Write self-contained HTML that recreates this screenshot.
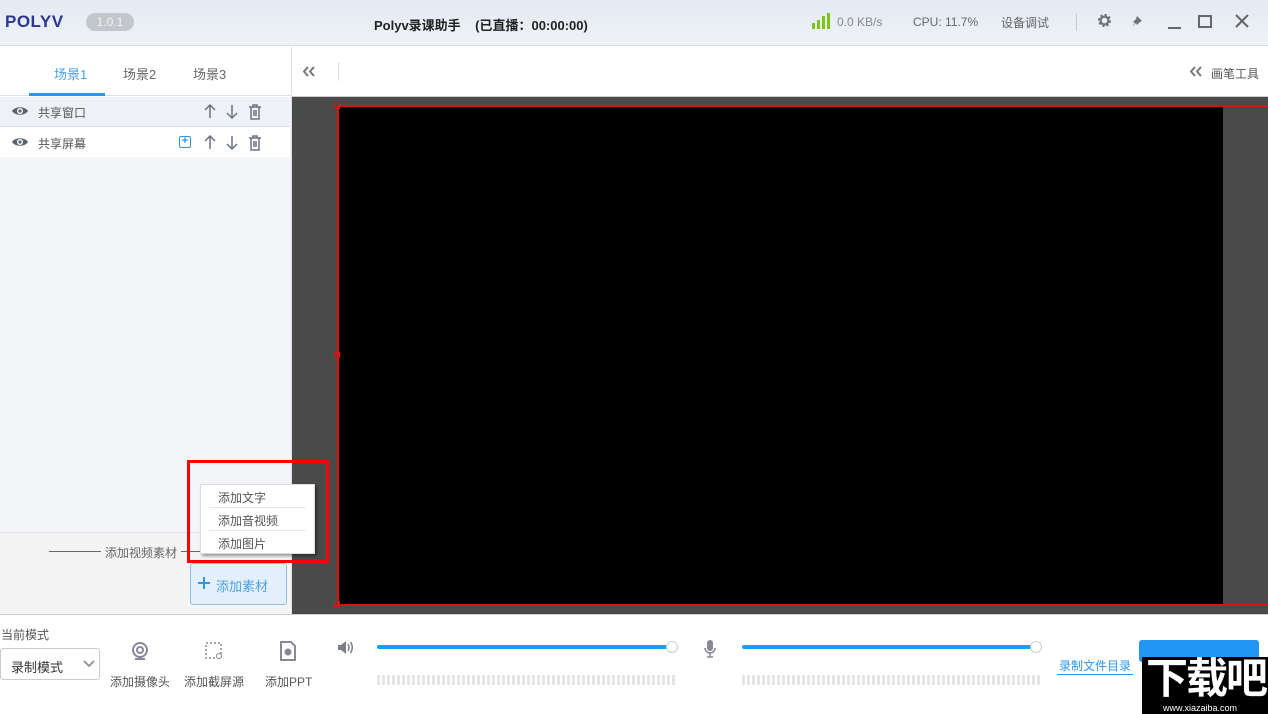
<!DOCTYPE html>
<html><head><meta charset="utf-8"><style>
*{margin:0;padding:0;box-sizing:border-box}
body{width:1268px;height:714px;overflow:hidden;position:relative;font-family:"Liberation Sans","Noto Sans CJK SC",sans-serif;background:#fff;color:#555}
.a{position:absolute}
.t{font-size:12px;white-space:nowrap}
</style></head><body>
<div class="a" style="left:0;top:0;width:1268px;height:46px;background:linear-gradient(#e3eaf2,#eef2f6);border-bottom:1px solid #d6dbe0"></div>
<div class="a" style="left:5px;top:12px;font-size:17px;font-weight:bold;color:#2a3690;letter-spacing:0.5px">POLYV</div>
<div class="a" style="left:86px;top:13px;width:48px;height:18px;border-radius:9px;background:#c3c7cb;color:#f4f4f4;font-size:12px;text-align:center;line-height:18px">1.0.1</div>
<div class="a" style="left:374px;top:15px;font-size:13px;font-weight:bold;color:#222">Polyv录课助手&nbsp;&nbsp;&nbsp;&nbsp;(已直播：00:00:00)</div>
<svg class="a" style="left:812px;top:13px" width="20" height="17"><rect x="0" y="10" width="3" height="6" fill="#7cc41a"/><rect x="5" y="7" width="3" height="9" fill="#7cc41a"/><rect x="10" y="3" width="3" height="13" fill="#7cc41a"/><rect x="15" y="0" width="3" height="16" fill="#7cc41a"/></svg>
<div class="a t" style="left:837px;top:15px;color:#888">0.0 KB/s</div>
<div class="a t" style="left:913px;top:15px;color:#666">CPU: 11.7%</div>
<div class="a t" style="left:1001px;top:14px;color:#666">设备调试</div>
<div class="a" style="left:1076px;top:13px;width:1px;height:18px;background:#c8ccd0"></div>
<svg class="a" style="left:1097px;top:13px" width="15" height="15" viewBox="0 0 16 16"><circle cx="8" cy="8" r="5.5" fill="none" stroke="#6b7280" stroke-width="3" stroke-dasharray="2.2 2.1"/><circle cx="8" cy="8" r="4.2" fill="none" stroke="#6b7280" stroke-width="2.4"/></svg>
<svg class="a" style="left:1131px;top:15px" width="12" height="12"><path d="M6 1l5 5-2 1-3 3-1-2-4 4 3-4-2-1 3-3z" fill="#6b7280"/></svg>
<div class="a" style="left:1168px;top:27px;width:13px;height:2px;background:#666"></div>
<div class="a" style="left:1198px;top:15px;width:14px;height:13px;border:2px solid #666"></div>
<svg class="a" style="left:1235px;top:14px" width="14" height="14"><path d="M1 1l12 12M13 1L1 13" stroke="#666" stroke-width="2"/></svg>
<div class="a" style="left:0;top:47px;width:291px;height:49px;background:#fff;border-bottom:1px solid #dde1e5"></div>
<div class="a t" style="left:54px;top:64px;font-size:13px;color:#4aa0e8">场景1</div>
<div class="a" style="left:29px;top:93px;width:76px;height:3px;background:#2c96ea"></div>
<div class="a t" style="left:123px;top:64px;font-size:13px;color:#666">场景2</div>
<div class="a t" style="left:193px;top:64px;font-size:13px;color:#666">场景3</div>
<div class="a" style="left:0;top:97px;width:291px;height:435px;background:#f3f5f8"></div>
<div class="a" style="left:0;top:97px;width:290px;height:30px;background:#eef2f6;border-bottom:1px solid #dde1e5"></div>
<div class="a" style="left:0;top:127px;width:290px;height:30px;background:#fff"></div>
<svg width="0" height="0" style="position:absolute"><defs>
<g id="eye"><path d="M0 5C3 0 13 0 16 5C13 10 3 10 0 5z" fill="#5a6570"/><circle cx="8" cy="5" r="3" fill="#fff"/><circle cx="8" cy="5" r="1.6" fill="#5a6570"/></g>
<g id="ud" stroke="#6b7280" stroke-width="1.5" fill="none"><path d="M6 14V1M1 6l5-5 5 5"/><path d="M28 1v13M23 9l5 5 5-5"/><path d="M45 3h12M49 3V1h4v2M47 3v12h8V3M50 6v6M52 6v6"/></g>
</defs></svg>
<svg class="a" style="left:12px;top:106px" width="16" height="10"><use href="#eye"/></svg>
<div class="a t" style="left:38px;top:104px;color:#555">共享窗口</div>
<svg class="a" style="left:204px;top:104px" width="60" height="16"><use href="#ud"/></svg>
<svg class="a" style="left:12px;top:137px" width="16" height="10"><use href="#eye"/></svg>
<div class="a t" style="left:38px;top:135px;color:#555">共享屏幕</div>
<div class="a" style="left:179px;top:136px;width:12px;height:12px;border:1.5px solid #2c96ea;border-radius:2px;color:#2c96ea;font-size:11px;line-height:9px;text-align:center;font-weight:bold">+</div>
<svg class="a" style="left:204px;top:135px" width="60" height="16"><use href="#ud"/></svg>
<div class="a" style="left:0;top:532px;width:291px;height:82px;background:#f4f4f4;border-top:1px solid #e2e5e8"></div>
<div class="a" style="left:49px;top:551px;width:52px;height:1px;background:#666"></div>
<div class="a t" style="left:105px;top:544px;color:#666">添加视频素材</div>
<div class="a" style="left:181px;top:551px;width:20px;height:1px;background:#666"></div>
<div class="a" style="left:190px;top:563px;width:97px;height:42px;background:#e3f0fb;border:1px solid #8cc2ee;border-radius:3px"></div>
<svg class="a" style="left:198px;top:577px" width="12" height="12"><path d="M6 0v12M0 6h12" stroke="#2c96ea" stroke-width="2"/></svg>
<div class="a t" style="left:216px;top:576px;font-size:13px;color:#4aa0e8">添加素材</div>
<div class="a" style="left:291px;top:47px;width:1px;height:568px;background:#dde1e5"></div>
<svg class="a" style="left:303px;top:66px" width="12" height="11"><path d="M5 1L1 5.5 5 10M11 1L7 5.5 11 10" stroke="#777" stroke-width="2" fill="none"/></svg>
<div class="a" style="left:338px;top:62px;width:1px;height:19px;background:#dde"></div>
<svg class="a" style="left:1190px;top:66px" width="12" height="11"><path d="M5 1L1 5.5 5 10M11 1L7 5.5 11 10" stroke="#777" stroke-width="2" fill="none"/></svg>
<div class="a t" style="left:1211px;top:65px;color:#555">画笔工具</div>
<div class="a" style="left:292px;top:96px;width:976px;height:1px;background:#ccc"></div>
<div class="a" style="left:292px;top:97px;width:976px;height:518px;background:#4b4a4a"></div>
<div class="a" style="left:338px;top:106px;width:885px;height:498px;background:#000"></div>
<div class="a" style="left:337px;top:105px;width:940px;height:501px;border:2px solid #e01010"></div>
<div class="a" style="left:334px;top:103px;width:6px;height:6px;border:1px solid #e01010"></div>
<div class="a" style="left:334px;top:352px;width:6px;height:6px;border:1px solid #e01010"></div>
<div class="a" style="left:334px;top:601px;width:6px;height:6px;border:1px solid #e01010"></div>
<div class="a" style="left:187px;top:460px;width:142px;height:103px;border:3px solid #f00"></div>
<div class="a" style="left:200px;top:484px;width:115px;height:70px;background:#fff;border:1px solid #ddd;box-shadow:2px 2px 3px rgba(0,0,0,.4)"></div>
<div class="a t" style="left:218px;top:489px;color:#555">添加文字</div>
<div class="a" style="left:209px;top:507px;width:97px;height:1px;background:#e6e6e6"></div>
<div class="a t" style="left:218px;top:512px;color:#555">添加音视频</div>
<div class="a" style="left:209px;top:530px;width:97px;height:1px;background:#e6e6e6"></div>
<div class="a t" style="left:218px;top:535px;color:#555">添加图片</div>
<div class="a" style="left:0;top:614px;width:1268px;height:1px;background:#ccc"></div>
<div class="a t" style="left:1px;top:626px;color:#555">当前模式</div>
<div class="a" style="left:0;top:648px;width:100px;height:32px;border:1px solid #ccc;border-radius:3px"></div>
<div class="a t" style="left:11px;top:657px;font-size:13px;color:#333">录制模式</div>
<svg class="a" style="left:83px;top:660px" width="12" height="8"><path d="M1 1l5 5 5-5" stroke="#999" stroke-width="2" fill="none"/></svg>
<svg class="a" style="left:131px;top:641px" width="18" height="20"><circle cx="9" cy="9" r="7" fill="none" stroke="#889" stroke-width="2"/><circle cx="9" cy="9" r="3" fill="none" stroke="#889" stroke-width="2"/><path d="M4 18h10" stroke="#889" stroke-width="2"/></svg>
<div class="a t" style="left:110px;top:673px;color:#555">添加摄像头</div>
<svg class="a" style="left:205px;top:642px" width="18" height="20"><rect x="1" y="1" width="15" height="15" fill="none" stroke="#889" stroke-width="1.5" stroke-dasharray="2 2"/><circle cx="14" cy="14" r="2.5" fill="#fff" stroke="#889"/></svg>
<div class="a t" style="left:184px;top:673px;color:#555">添加截屏源</div>
<svg class="a" style="left:279px;top:641px" width="18" height="20"><path d="M2 1h10l4 4v14H2z" fill="none" stroke="#889" stroke-width="2"/><circle cx="9" cy="11" r="3.5" fill="#889"/></svg>
<div class="a t" style="left:265px;top:673px;color:#555">添加PPT</div>
<svg class="a" style="left:337px;top:640px" width="17" height="15"><path d="M1 5h3l5-4v13l-5-4H1z" fill="#7a7f88"/><path d="M11 4q2 3.5 0 7M13.5 2q3.5 5.5 0 11" stroke="#7a7f88" stroke-width="1.5" fill="none"/></svg>
<div class="a" style="left:377px;top:645px;width:295px;height:4px;background:#0ea5ec;border-radius:2px"></div>
<div class="a" style="left:666px;top:641px;width:12px;height:12px;border-radius:50%;background:#fff;border:1px solid #ccc"></div>
<div class="a" style="left:377px;top:675px;width:299px;height:10px;background:repeating-linear-gradient(90deg,#e3e5e8 0 3px,#fff 3px 5px)"></div>
<svg class="a" style="left:703px;top:640px" width="14" height="18"><rect x="4" y="0" width="6" height="11" rx="3" fill="#889"/><path d="M2 8a5 5 0 0 0 10 0M7 13v4M4 17h6" stroke="#889" stroke-width="1.5" fill="none"/></svg>
<div class="a" style="left:742px;top:645px;width:295px;height:4px;background:#0ea5ec;border-radius:2px"></div>
<div class="a" style="left:1030px;top:641px;width:12px;height:12px;border-radius:50%;background:#fff;border:1px solid #ccc"></div>
<div class="a" style="left:742px;top:675px;width:299px;height:10px;background:repeating-linear-gradient(90deg,#e3e5e8 0 3px,#fff 3px 5px)"></div>
<div class="a t" style="left:1059px;top:657px;color:#2c96ea">录制文件目录</div>
<div class="a" style="left:1057px;top:674px;width:76px;height:1px;background:#2c96ea"></div>
<div class="a" style="left:1139px;top:640px;width:120px;height:22px;background:#2196f3;border-radius:3px"></div>
<div class="a" style="left:1142px;top:657px;width:126px;height:57px;background:#000"></div>
<div class="a" style="left:1146px;top:655px;font-size:42px;font-weight:bold;color:#fff;letter-spacing:-2px;line-height:48px">下载吧</div>
<div class="a" style="left:1163px;top:703px;font-size:9px;color:#fff">www.xiazaiba.com</div>
</body></html>
